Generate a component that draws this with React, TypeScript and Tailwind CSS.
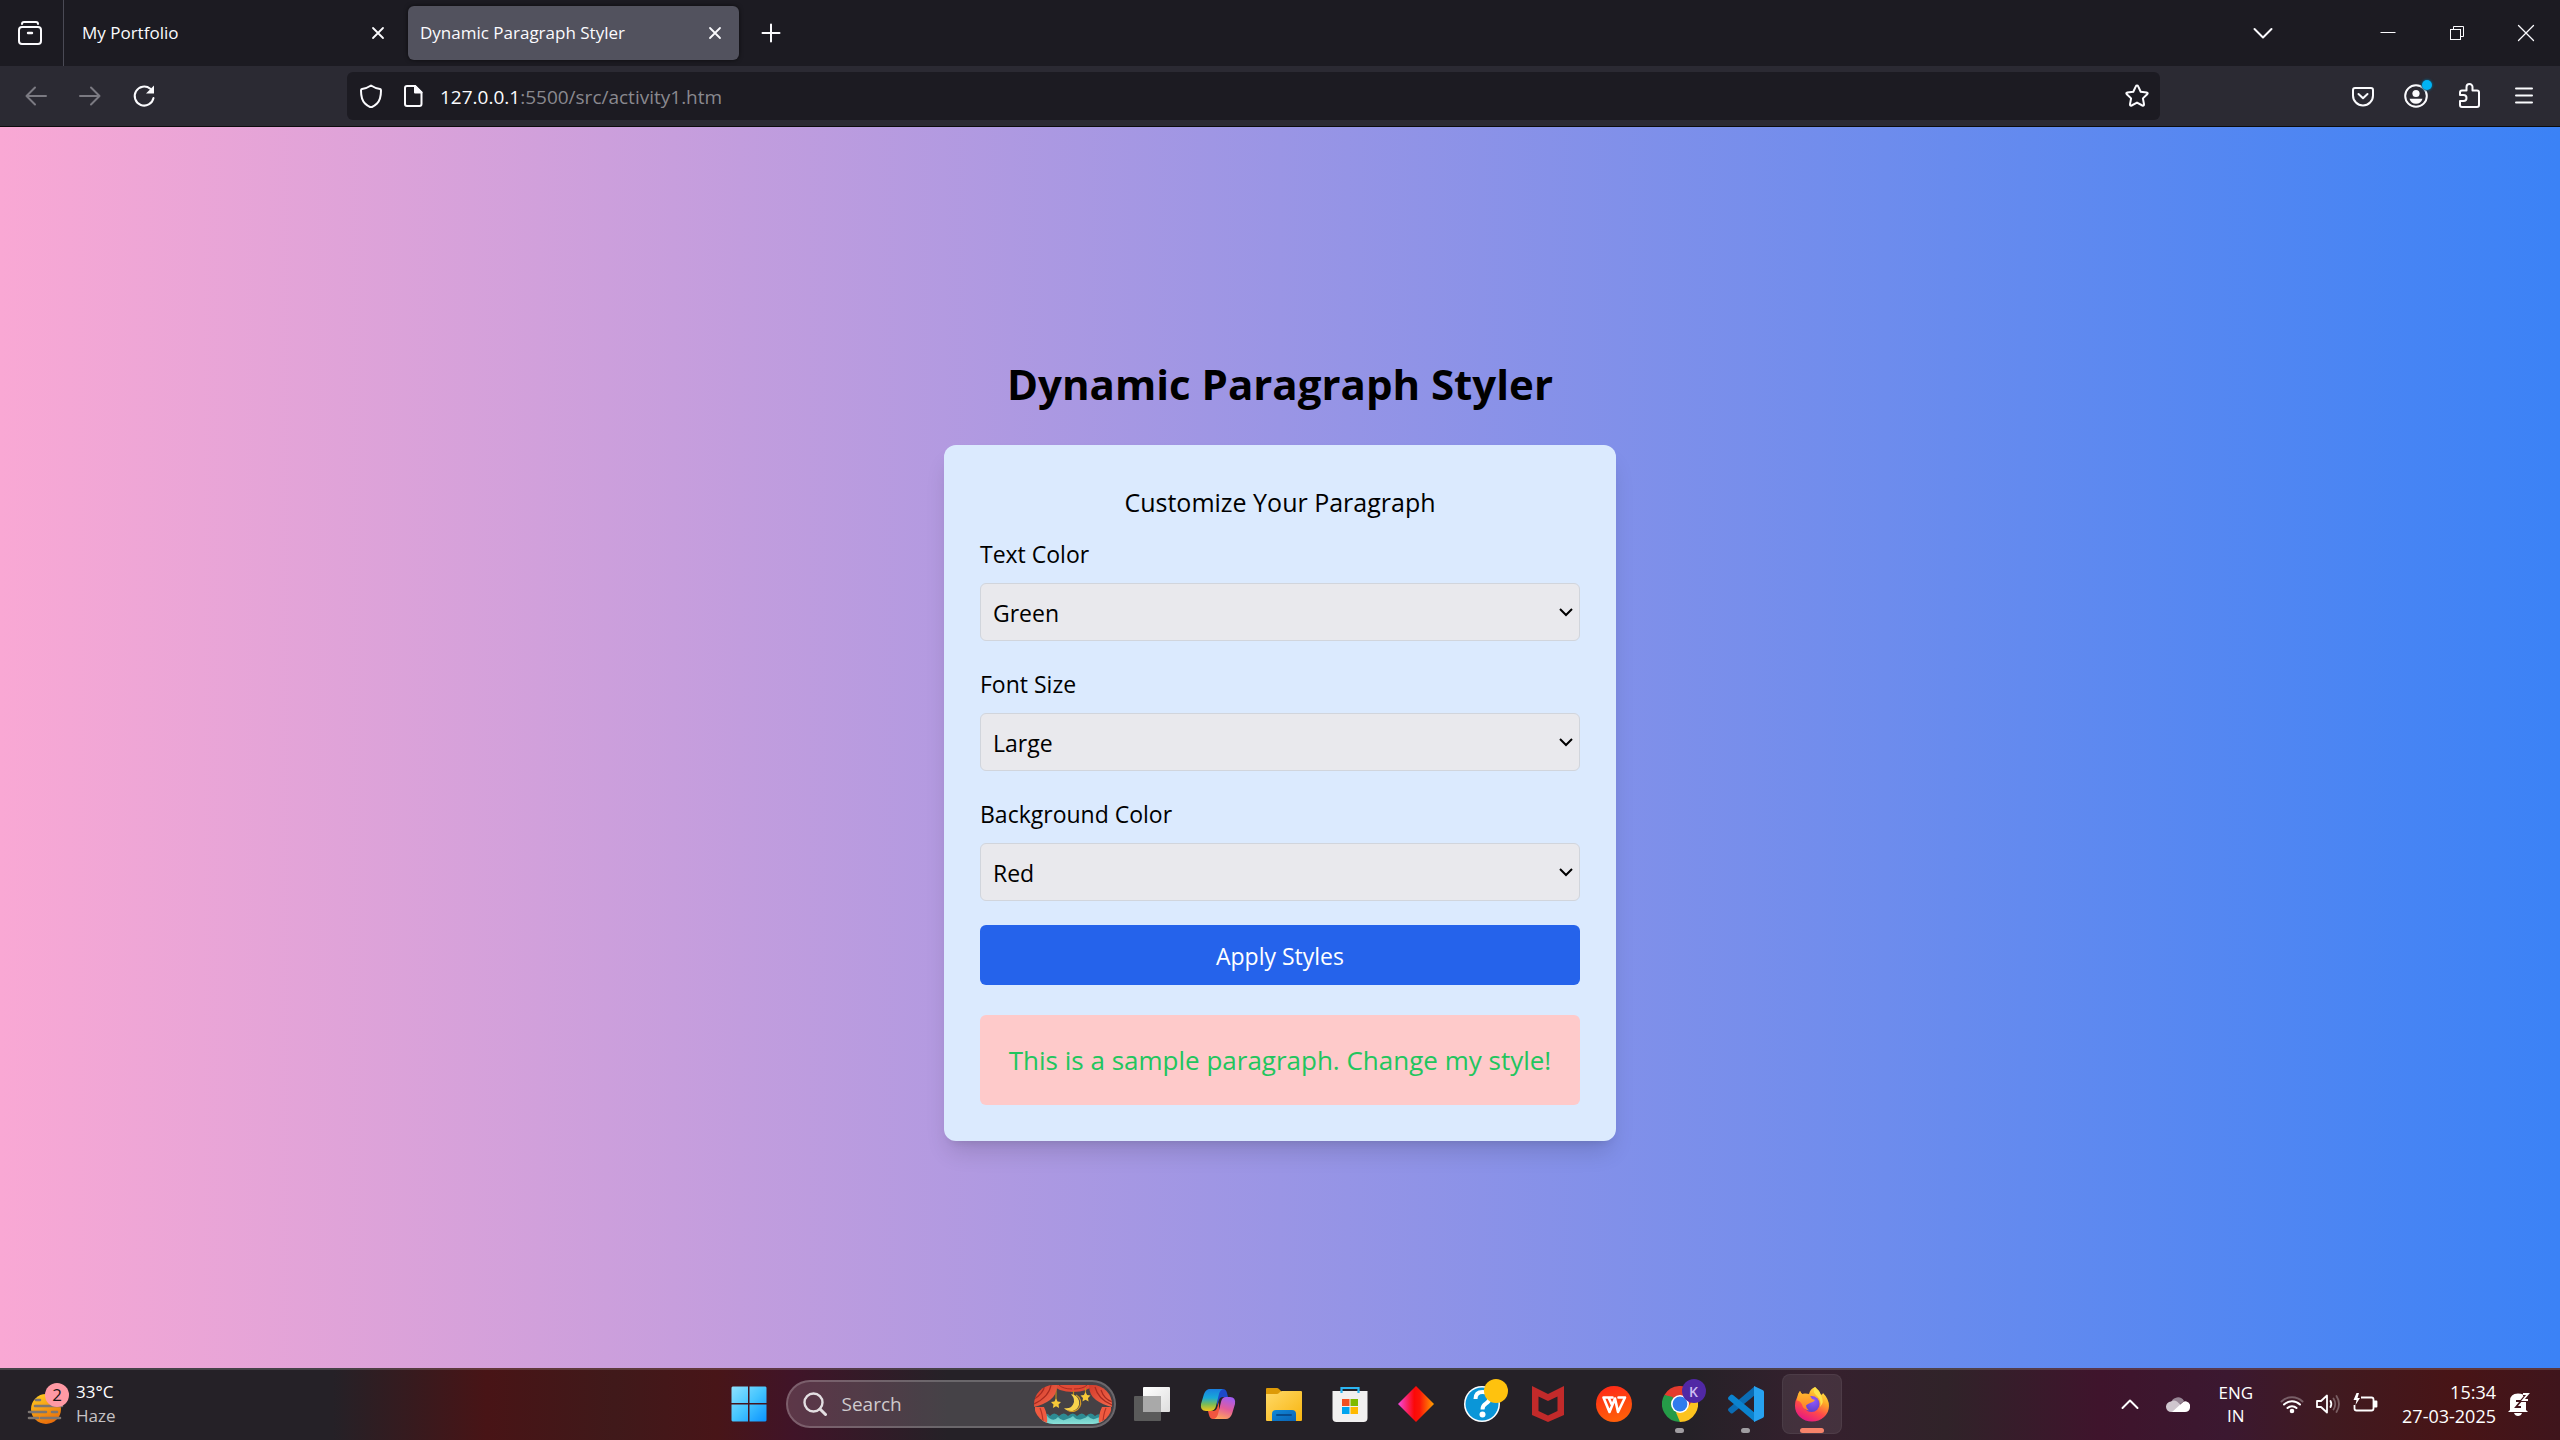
import { useState, type ReactNode } from "react";

type IconProps = { className?: string; size?: number; box?: string; children: ReactNode };

function Line({ className = "", size = 24, box, children }: IconProps) {
  return (
    <svg
      className={className}
      width={size}
      height={size}
      viewBox={box ?? `0 0 ${size} ${size}`}
      fill="none"
      stroke="currentColor"
      strokeWidth="2"
      strokeLinecap="round"
      strokeLinejoin="round"
      aria-hidden="true"
    >
      {children}
    </svg>
  );
}

function CloseMark() {
  return (
    <Line size={24}>
      <path d="M7 7l10 10M17 7L7 17" strokeWidth="1.8" />
    </Line>
  );
}

function TabStrip() {
  return (
    <header className="flex h-[66px] items-center bg-[#1c1b22] text-[#fbfbfe]">
      <button aria-label="Recent browsing" className="flex h-full w-16 items-center justify-center border-r border-[#4a4a55] pr-1">
        <Line size={26}>
          <rect x="2" y="7" width="22" height="17" rx="3" />
          <path d="M5 4q0-2 2-2h12q2 0 2 2" />
          <path d="M11 13h4" strokeWidth="2.4" />
        </Line>
      </button>
      <div className="mr-1 flex h-[54px] w-[340px] items-center justify-between pl-[18px] pr-[14px]">
        <span className="text-[17px]">My Portfolio</span>
        <button aria-label="Close tab My Portfolio"><CloseMark /></button>
      </div>
      <div className="flex h-[54px] w-[331px] items-center justify-between rounded-md bg-[#52525e] pl-3 pr-3 shadow-[0_0_4px_rgba(0,0,0,0.6)]">
        <span className="text-[17px]">Dynamic Paragraph Styler</span>
        <button aria-label="Close tab Dynamic Paragraph Styler"><CloseMark /></button>
      </div>
      <button aria-label="New tab" className="ml-5">
        <Line size={24}><path d="M12 3.500v17M3.500 12h17" /></Line>
      </button>
      <div className="ml-auto flex items-center">
        <button aria-label="List all tabs" className="mr-[45px] flex w-[90px] justify-center">
          <Line size={24}><path d="M3.500 8l8.500 8.500L20.500 8" /></Line>
        </button>
        <button aria-label="Minimize" className="flex w-[69px] justify-center">
          <Line size={24}><path d="M4.500 11.500h15" strokeWidth="1" strokeLinecap="butt" /></Line>
        </button>
        <button aria-label="Restore" className="flex w-[69px] justify-center">
          <Line size={24}>
            <g strokeWidth="1" strokeLinejoin="miter">
              <rect x="5.500" y="8.500" width="10" height="10" />
              <path d="M8.500 8.500v-3h10v10h-3" />
            </g>
          </Line>
        </button>
        <button aria-label="Close window" className="flex w-[69px] justify-center">
          <Line size={24}><path d="M4.500 4.500l15 15M19.500 4.500l-15 15" strokeWidth="1.300" /></Line>
        </button>
      </div>
    </header>
  );
}

function Toolbar() {
  return (
    <nav aria-label="Browser toolbar" className="flex h-[61px] items-center border-b border-[#0c0c0d] bg-[#2b2a33] text-[#fbfbfe]">
      <div className="flex w-[347px] items-center gap-[30px] pl-6">
        <button aria-label="Back" className="text-[#7b7a82]">
          <Line size={24}><path d="M22 12H2.500M11 3.500L2.500 12l8.500 8.500" /></Line>
        </button>
        <button aria-label="Forward" className="text-[#7b7a82]">
          <Line size={24}><path d="M2 12h19.500M13 3.500l8.500 8.500-8.500 8.500" /></Line>
        </button>
        <button aria-label="Reload">
          <Line size={24}>
            <path d="M21.500 14a9.500 9.500 0 1 1-3.200-9.200" />
            <path d="M22 1.500v8h-8z" fill="currentColor" stroke="none" />
          </Line>
        </button>
      </div>
      <div className="flex h-12 flex-1 items-center rounded-md bg-[#1c1b22] pl-3 pr-[11px]">
        <button aria-label="Tracking protection">
          <Line size={24}><path d="M12 1.500q4.500 3 9 3.500q1 0.300 1 1.500q0 9-4 13q-2.500 2.500-6 4q-3.500-1.500-6-4q-4-4-4-13q0-1.200 1-1.500q4.500-0.500 9-3.500z" /></Line>
        </button>
        <button aria-label="Site information" className="ml-[18px]">
          <Line size={24}>
            <path d="M6 2h8l6.500 6.500V20q0 2-2 2H6q-2 0-2-2V4q0-2 2-2z" />
            <path d="M14 2v6.500h6.500z" fill="currentColor" />
          </Line>
        </button>
        <div className="relative ml-[15px] flex-1 pt-0.5">
          <input
            aria-label="Address"
            className="w-full bg-transparent text-[19px] text-transparent caret-white outline-none"
            defaultValue="127.0.0.1:5500/src/activity1.htm"
          />
          <span aria-hidden="true" className="pointer-events-none absolute inset-0 flex items-center pt-0.5 text-[19px] text-[#8a898f]">
            <span className="text-[#fbfbfe]">127.0.0.1</span>:5500/src/activity1.htm
          </span>
        </div>
        <button aria-label="Bookmark this page">
          <Line size={24}><path d="M12 1.500q0.800 0 1.200 0.900l2.500 5.300 5.900 0.800q1.800 0.400 0.600 1.800l-4.300 4.100 1.100 5.900q0.100 1.800-1.600 1.200L12 18.600l-5.400 2.900q-1.700 0.600-1.600-1.200l1.100-5.900-4.300-4.100q-1.200-1.400 0.600-1.800l5.900-0.800 2.500-5.300q0.400-0.900 1.200-0.900z" /></Line>
        </button>
      </div>
      <div className="flex w-[400px] items-center justify-end gap-[29px] pr-6">
        <button aria-label="Save to Pocket">
          <Line size={24}>
            <path d="M4 4h16q2 0 2 2v5.500a10 10 0 0 1-20 0V6q0-2 2-2z" />
            <path d="M7.500 10l4.500 4.300L16.500 10" />
          </Line>
        </button>
        <button aria-label="Account" className="relative">
          <Line size={24}>
            <circle cx="12" cy="12" r="10.800" />
            <circle cx="12" cy="9.500" r="3.600" fill="currentColor" stroke="none" />
            <path d="M5.500 14.800h13q-1.500 5-6.500 5t-6.500-5z" fill="currentColor" stroke="none" />
          </Line>
          <span className="absolute -right-1 -top-1 h-2.5 w-2.5 rounded-full bg-[#00b3f4] shadow-[0_0_2px_1px_#12506d]" />
        </button>
        <button aria-label="Extensions">
          <Line size={26}>
            <path d="M5 24q-2 0-2-2v-4h3.500a3 3 0 0 0 0-6H3V9.500q0-2 2-2h4.500V4a3 3 0 0 1 6 0v3.500H20q2 0 2 2V22q0 2-2 2z" />
          </Line>
        </button>
        <button aria-label="Menu">
          <Line size={24}><path d="M4 4.500h16M4 11.500h16M4 18.500h16" /></Line>
        </button>
      </div>
    </nav>
  );
}

type FieldProps = {
  id: string;
  label: string;
  value: string;
  options: string[];
  onChange: (value: string) => void;
};

function SelectField({ id, label, value, options, onChange }: FieldProps) {
  return (
    <div className="flex flex-col gap-3">
      <label htmlFor={id} className="text-[23px] leading-[34px]">{label}</label>
      <div className="relative">
        <select
          id={id}
          value={value}
          onChange={(e) => onChange(e.target.value)}
          className="h-[58px] w-full appearance-none rounded-md border border-gray-300 bg-[#e9e9ed] px-3 pt-1 text-[23px] text-black"
        >
          {options.map((o) => <option key={o}>{o}</option>)}
        </select>
        <svg className="pointer-events-none absolute right-1.5 top-6 h-3 w-4" viewBox="0 0 16 12" fill="none" stroke="#000" strokeWidth="2" aria-hidden="true">
          <path d="M2 2l6 6 6-6" />
        </svg>
      </div>
    </div>
  );
}

const textColors: Record<string, string> = {
  Black: "text-black",
  Green: "text-[#22c55e]",
  Blue: "text-[#3b82f6]",
};
const textSizes: Record<string, string> = {
  Small: "text-[20px]",
  Medium: "text-[23px]",
  Large: "text-[26px]",
};
const backgrounds: Record<string, string> = {
  White: "bg-white",
  Red: "bg-[#fecaca]",
  Yellow: "bg-[#fef08a]",
};

function Styler() {
  const [color, setColor] = useState("Green");
  const [size, setSize] = useState("Large");
  const [back, setBack] = useState("Red");
  const [applied, setApplied] = useState({ color: "Green", size: "Large", back: "Red" });
  return (
    <main className="flex flex-1 flex-col items-center justify-center gap-9 bg-[linear-gradient(to_right,#f9a8d4,#3b82f6)] text-black">
      <h1 className="pt-1 text-[42px] font-bold leading-[50px]">Dynamic Paragraph Styler</h1>
      <form
        onSubmit={(e) => {
          e.preventDefault();
          setApplied({ color, size, back });
        }}
        className="w-full max-w-2xl rounded-xl bg-[#dbeafe] p-9 shadow-[0_15px_23px_-5px_rgba(0,0,0,0.14),0_6px_9px_-6px_rgba(0,0,0,0.12)]"
      >
        <h2 className="text-center text-[25px] leading-[42px]">Customize Your Paragraph</h2>
        <div className="mt-3.5 flex flex-col gap-[26px]">
          <SelectField id="color" label="Text Color" value={color} options={Object.keys(textColors)} onChange={setColor} />
          <SelectField id="size" label="Font Size" value={size} options={Object.keys(textSizes)} onChange={setSize} />
          <SelectField id="back" label="Background Color" value={back} options={Object.keys(backgrounds)} onChange={setBack} />
        </div>
        <button type="submit" className="mt-6 h-15 w-full rounded-md bg-[#2563eb] pt-1 text-[23px] text-white">Apply Styles</button>
        <p className={`mt-[30px] rounded-md px-6 py-6 text-center leading-[42px] ${textColors[applied.color]} ${textSizes[applied.size]} ${backgrounds[applied.back]}`}>
          This is a sample paragraph. Change my style!
        </p>
      </form>
    </main>
  );
}

function Pic({ children }: { children: ReactNode }) {
  return (
    <svg width="36" height="36" viewBox="0 0 36 36" aria-hidden="true">{children}</svg>
  );
}

function AppButton({ label, state = "idle", children }: { label: string; state?: "idle" | "open" | "active"; children: ReactNode }) {
  return (
    <button aria-label={label} className="relative flex h-[66px] w-[66px] items-center justify-center">
      {state === "active" && <span className="absolute inset-x-[3px] inset-y-[3px] rounded-lg border border-white/5 bg-white/8" />}
      <span className="relative">{children}</span>
      {state === "open" && <span className="absolute bottom-1 h-[5px] w-[9px] rounded-full bg-[#a09da1]" />}
      {state === "active" && <span className="absolute bottom-1 h-[5px] w-6 rounded-full bg-[#f6836a]" />}
    </button>
  );
}

function StageScene() {
  return (
    <svg width="78" height="39" viewBox="0 0 78 39" aria-hidden="true">
      <defs>
        <clipPath id="pill"><rect width="78" height="39" rx="19.500" /></clipPath>
        <linearGradient id="sea" x1="0" y1="0" x2="0" y2="1"><stop stopColor="#5fc4c0" /><stop offset="1" stopColor="#8fe3da" /></linearGradient>
        <linearGradient id="drape" x1="0" y1="0" x2="1" y2="1"><stop stopColor="#d33b2b" /><stop offset="1" stopColor="#f4694c" /></linearGradient>
      </defs>
      <g clipPath="url(#pill)">
        <rect width="78" height="39" fill="#454145" />
        <path d="M8 32q4-6 8-1q4-5 9 0q5-5 9 0q5-5 9 0q5-5 9 0q5-5 9 0q4-4 9 1v8H8z" fill="#2d8b93" />
        <path d="M8 31q4-3 7 2q5 4 9-1q4 5 9 2q4-1 6-3q4 5 9 3q4-1 6-3q4 5 9 2q4-1 7-3v10H8z" fill="url(#sea)" />
        <path d="M19 0h40q-5 7-20 7T19 0z" fill="#e04a35" />
        <path d="M25 0q4 4 13 4M53 0q-4 4-13 4" stroke="#a92c22" strokeWidth="1" fill="none" />
        <path d="M22 3v12M39.500 6v4M51.500 3v6" stroke="#b98a1b" strokeWidth="1.200" />
        <path d="M22 13.500l1.600 3.100 3.400 0.500-2.500 2.400 0.600 3.500-3.100-1.700-3.100 1.700 0.600-3.500L17 17.100l3.400-0.500z" fill="#f6c938" />
        <path d="M51.500 7l1.600 3.100 3.400 0.500-2.500 2.400 0.600 3.500-3.100-1.700-3.100 1.700 0.600-3.500-2.500-2.400 3.400-0.500z" fill="#f6c938" />
        <path d="M37 9.300a8.500 8.500 0 1 1-7 13.700q6 1.500 9-3.500t-2-10.200z" fill="#f8d24c" />
        <path d="M42 10a8.500 8.500 0 0 1-8 15.500" stroke="#d29a26" strokeWidth="1.200" fill="none" />
        <path d="M0 0h23q0 10-7 15T0 22z" fill="url(#drape)" />
        <path d="M78 0H55q0 10 7 15t16 7z" fill="url(#drape)" />
        <path d="M17 0Q15 12 0 19M11 0q-2 9-11 14M67 5q3 9 11 12M61 2q3 12 17 18" stroke="#a82a20" strokeWidth="1.200" fill="none" />
        <path d="M1 22h9q4 8 3 17H0zM77 22h-9q-4 8-3 17h13z" fill="#ef5a40" />
        <path d="M6 23q3 7 3 16M72 23q-3 7-3 16" stroke="#b43326" strokeWidth="1.200" fill="none" />
      </g>
    </svg>
  );
}

function Copilot() {
  return (
    <Pic>
      <defs>
        <linearGradient id="cpA" x1="0" y1="0" x2="0" y2="1"><stop stopColor="#1a7fe0" /><stop offset="0.400" stopColor="#18a8d8" /><stop offset="0.700" stopColor="#7dbb55" /><stop offset="1" stopColor="#f5c518" /></linearGradient>
        <linearGradient id="cpB" x1="0.600" y1="0" x2="0.300" y2="1"><stop stopColor="#a25cf0" /><stop offset="0.500" stopColor="#e25c9c" /><stop offset="1" stopColor="#ffa45c" /></linearGradient>
      </defs>
      <path d="M17 3h6q3 0 4 4l1 4h-5q-3 0-4 3l-2 6z" fill="#1c49c9" />
      <path d="M19 33h-6q-3 0-4-4l-1-4h5q3 0 4-3l2-6z" fill="#f0553f" />
      <path d="M10 3h13q-3 1-4 5l-3 12q-1 5-6 5H6q-6 0-5-7l3-10q2-5 6-5z" fill="url(#cpA)" />
      <path d="M26 33H14q3-1 4-5l3-12q1-5 5-5h4q6 0 5 7l-3 10q-2 5-6 5z" fill="url(#cpB)" />
    </Pic>
  );
}

function Firefox() {
  return (
    <Pic>
      <defs>
        <linearGradient id="fxA" x1="0.800" y1="0" x2="0.300" y2="1"><stop stopColor="#fff44f" /><stop offset="0.350" stopColor="#ffa927" /><stop offset="0.650" stopColor="#ff4a4a" /><stop offset="1" stopColor="#e31587" /></linearGradient>
        <radialGradient id="fxB" cx="0.600" cy="0.300" r="0.800"><stop stopColor="#9059ff" /><stop offset="1" stopColor="#5b3bc0" /></radialGradient>
        <linearGradient id="fxC" x1="0" y1="0" x2="0" y2="1"><stop stopColor="#ffbd2e" /><stop offset="1" stopColor="#ff7a2a" /></linearGradient>
      </defs>
      <path d="M21 1q4 3 6 8q2-1 2-2q6 6 6 13a17 15.500 0 0 1-34 0q0-6 3-10q0-3 2-5q1 2 2 3q4-1 7 0q1-5 6-7z" fill="url(#fxA)" />
      <circle cx="17.500" cy="18" r="8" fill="url(#fxB)" />
      <path d="M6 5q1 2 2 3q5-1 8 2q1 1 2 3l3 1q-1 2-5 3q-3 1-4 2.500q0 3 3 5q-6-1-7-6q-2-4-5-4q0-6 3-9.500z" fill="url(#fxC)" />
      <path d="M21 1q-3 5 2 9q5 5 3 11q5-5 1-12q-2-5-6-8z" fill="#ffe24a" />
    </Pic>
  );
}

function Taskbar() {
  return (
    <footer className="grid h-[72px] grid-cols-[1fr_auto_1fr] items-center border-t-2 border-white/15 bg-[#252127] bg-[linear-gradient(to_right,#252127_13%,#481416_19%,#40191a_24%,#481518_28%,#401428_31%,#252127_37%,#252127_66%,#36202e_71%,#302329_76%,#3f142c_82%,#3b1830_87%,#401a20_91%,#481416_96%,#3f151c_100%)] bg-origin-border pb-0.5 text-white">
      <button aria-label="Weather, 33 degrees, haze" className="flex items-center justify-self-start pl-[27px] text-left">
        <svg width="44" height="46" viewBox="0 0 44 46" aria-hidden="true">
          <defs><linearGradient id="sun" x1="0.300" y1="0" x2="0.700" y2="1"><stop stopColor="#ffc81e" /><stop offset="1" stopColor="#e8680a" /></linearGradient></defs>
          <circle cx="19" cy="28" r="15" fill="url(#sun)" />
          <path d="M9 19h4M8 25h27M2 31h17M25 31h5M2 37h9M14 37h19" stroke="#7d7672" strokeWidth="2.600" strokeLinecap="round" />
          <circle cx="30" cy="14" r="12" fill="#ff99a4" />
          <text x="30" y="20" textAnchor="middle" fontSize="17" fill="#1b1517">2</text>
        </svg>
        <span className="ml-[5px] flex flex-col text-[17px] leading-6">
          <span>33°C</span>
          <span className="text-[#c5c1c4]">Haze</span>
        </span>
      </button>

      <div className="flex items-center">
        <AppButton label="Start">
          <Pic>
            <defs><linearGradient id="win" x1="0" y1="0" x2="1" y2="1"><stop stopColor="#8fe2ff" /><stop offset="0.500" stopColor="#45c5ff" /><stop offset="1" stopColor="#0a93ff" /></linearGradient></defs>
            <path d="M1.500 0.500H17V17H0.500V1.500zM18.500 0.500H34.500L35.500 1.500V17H18.500zM0.500 18.500H17V35.500H1.500L0.500 34.500zM18.500 18.500H35.500V34.500L34.500 35.500H18.500z" fill="url(#win)" />
          </Pic>
        </AppButton>
        <div className="ml-1 mr-[3px] flex h-12 w-[330px] items-center rounded-full border-2 border-white/20 bg-white/15 pl-[15px] pr-0.5">
          <svg width="24" height="24" viewBox="0 0 24 24" fill="none" stroke="#e3dfe2" strokeWidth="2.400" strokeLinecap="round" aria-hidden="true">
            <circle cx="10.500" cy="10.500" r="9" />
            <path d="M17 17l5.500 5.500" strokeWidth="3" />
          </svg>
          <input aria-label="Search" placeholder="Search" className="ml-[15px] min-w-0 flex-1 bg-transparent text-[19px] text-white outline-none placeholder:text-[#cfcbce]" />
          <StageScene />
        </div>
        <AppButton label="Task view">
          <Pic>
            <defs><linearGradient id="tvA" x1="0" y1="0" x2="1" y2="1"><stop stopColor="#ffffff" /><stop offset="1" stopColor="#dedede" /></linearGradient></defs>
            <rect x="9" y="1" width="27" height="25" rx="1" fill="url(#tvA)" />
            <rect x="0" y="10" width="27" height="25" rx="1" fill="#5a5a5a" />
            <rect x="9" y="10" width="18" height="16" fill="#a9a9a9" />
          </Pic>
        </AppButton>
        <AppButton label="Copilot"><Copilot /></AppButton>
        <AppButton label="File Explorer">
          <Pic>
            <defs>
              <linearGradient id="fol" x1="0" y1="0" x2="1" y2="1"><stop stopColor="#ffd968" /><stop offset="1" stopColor="#f8b50f" /></linearGradient>
              <linearGradient id="folB" x1="0" y1="0" x2="1" y2="1"><stop stopColor="#1088d8" /><stop offset="1" stopColor="#0a63b4" /></linearGradient>
            </defs>
            <path d="M0 3q0-1 1-1h10q1 0 2 1l3 3v4H0z" fill="#dd9a07" />
            <path d="M0 8h11q1 0 2-1l1.500-1.500q1-0.500 2-0.500H35q1 0 1 1v28q0 1-1 1H1q-1 0-1-1z" fill="url(#fol)" />
            <path d="M6 35v-7q0-4 4-4h16q4 0 4 4v7z" fill="url(#folB)" />
            <path d="M11 29h14" stroke="#084c8d" strokeWidth="2" strokeLinecap="round" />
          </Pic>
        </AppButton>
        <AppButton label="Microsoft Store">
          <Pic>
            <path d="M0.500 5h35v27q0 4-4 4h-27q-4 0-4-4z" fill="#f1f0f0" />
            <path d="M9.500 7V2h17v5" stroke="#2bb5f2" strokeWidth="2.200" fill="none" />
            <path d="M10 13h7.500v7H10z" fill="#f25022" /><path d="M18.500 13H26v7h-7.500z" fill="#7fba00" />
            <path d="M10 21h7.500v7H10z" fill="#00a4ef" /><path d="M18.500 21H26v7h-7.500z" fill="#ffb900" />
          </Pic>
        </AppButton>
        <AppButton label="Diamond app">
          <Pic>
            <defs><linearGradient id="dia"><stop stopColor="#f548e0" /><stop offset="0.450" stopColor="#fb0808" /><stop offset="0.600" stopColor="#fb1508" /><stop offset="1" stopColor="#ffa000" /></linearGradient></defs>
            <path d="M18 0l18 18-18 18L0 18z" fill="url(#dia)" />
          </Pic>
        </AppButton>
        <AppButton label="Help">
          <Pic>
            <circle cx="18" cy="18" r="18" fill="#fff" />
            <circle cx="18" cy="18" r="16.500" fill="#0a96d8" />
            <path d="M11.500 13q0-7 7-7t7 6q0 3.500-3.500 5.500t-3.500 6" stroke="#fff" strokeWidth="4" fill="none" />
            <circle cx="18.500" cy="28.500" r="3" fill="#fff" />
          </Pic>
          <span className="absolute -right-2 -top-[7px] h-6 w-6 rounded-full bg-[#ffc20e]" />
        </AppButton>
        <AppButton label="McAfee">
          <Pic>
            <path d="M2 0l16 8 16-8v29L18 36 2 29zM8.500 10.500v14.500L18 29.500l9.500-4.500V10.500L18 15z" fill="#c22a2a" fillRule="evenodd" />
          </Pic>
        </AppButton>
        <AppButton label="WPS Office">
          <Pic>
            <defs><linearGradient id="wps" x1="0" y1="0" x2="0.300" y2="1"><stop stopColor="#ff2418" /><stop offset="1" stopColor="#ff5d0a" /></linearGradient></defs>
            <circle cx="18" cy="18" r="18" fill="url(#wps)" />
            <path d="M16.500 11.500H7.500l6 14.500 5.500-13.500 3 13.500 7-14.500h-6.500M12.500 11.500l3 6.500" stroke="#fff" strokeWidth="2.600" fill="none" strokeLinejoin="round" strokeLinecap="round" />
          </Pic>
        </AppButton>
        <AppButton label="Chrome" state="open">
          <Pic>
            <path d="M18 18L2.400 9A18 18 0 0 1 33.600 9z" fill="#e33b2e" />
            <path d="M18 18L33.600 9A18 18 0 0 1 18 36z" fill="#fcc31e" />
            <path d="M18 18l0.100 18A18 18 0 0 1 2.400 9z" fill="#259b48" />
            <path d="M18 9.500h15.800L26 21z" fill="#e33b2e" />
            <path d="M25.500 22L18 36l-4-9.500z" fill="#fcc31e" />
            <path d="M10.800 22.500L2.400 9l8.400 2z" fill="#259b48" />
            <circle cx="18" cy="18" r="9" fill="#fff" />
            <circle cx="18" cy="18" r="7.400" fill="#2f7bee" />
          </Pic>
          <span className="absolute -right-2 -top-[7px] flex h-6 w-6 items-center justify-center rounded-full bg-[#5028a5] text-[14px] font-semibold text-[#cdbcf2]">K</span>
        </AppButton>
        <AppButton label="Visual Studio Code" state="open">
          <Pic>
            <path d="M27 0v9L5 27q-1.500 1-2.500 0L0.500 25q-1-1.200 0-2.500z" fill="#0b6cb4" />
            <path d="M0.500 13.500q-1-1.200 0-2.500l2-2q1-1 2.500 0l22 18v9z" fill="#0b83cf" />
            <path d="M26 0l8.500 4q1.500 0.700 1.500 2v24q0 1.300-1.500 2L26 36z" fill="#27a2f0" />
          </Pic>
        </AppButton>
        <AppButton label="Firefox" state="active"><Firefox /></AppButton>
      </div>

      <div className="flex items-center justify-self-end pr-[30px]">
        <button aria-label="Show hidden icons" className="mr-[27px]">
          <Line size={18}><path d="M1.500 13L9 5.500l7.500 7.500" /></Line>
        </button>
        <button aria-label="OneDrive" className="mr-[28px]">
          <svg width="24" height="18" viewBox="0 0 24 18" aria-hidden="true">
            <path d="M5 8a7 7 0 0 1 13-2l-5 4z" fill="#978695" />
            <path d="M5.500 17A5 5 0 0 1 5 6.500q3-2 6 0L18 13l-9 4z" fill="#cfc6ce" />
            <path d="M6 17L16 8q2-2.500 4.500-1.500A5.400 5.400 0 0 1 19 17z" fill="#fff" />
          </svg>
        </button>
        <button className="mr-[27px] flex flex-col items-center text-[17px] leading-[23px]">
          <span>ENG</span>
          <span>IN</span>
        </button>
        <button aria-label="Network, volume and battery" className="mr-6 flex items-center gap-3">
          <svg width="24" height="24" viewBox="0 0 24 24" fill="none" stroke="#fff" strokeWidth="2" strokeLinecap="round" aria-hidden="true">
            <path d="M1.500 9.500a15 15 0 0 1 21 0" opacity="0.300" />
            <path d="M4 12.500a11.500 11.500 0 0 1 16 0M7.500 16a6.500 6.500 0 0 1 9 0" />
            <circle cx="12" cy="19" r="1.300" fill="#fff" />
          </svg>
          <svg width="24" height="24" viewBox="0 0 24 24" fill="none" stroke="#fff" strokeWidth="1.800" strokeLinejoin="round" strokeLinecap="round" aria-hidden="true">
            <path d="M1 9h4l6-5.500v17L5 15H1z" />
            <path d="M14.500 9q1.700 3 0 6" />
            <path d="M17.500 6.500q3.500 5.500 0 11M20.500 4q5 8 0 16" opacity="0.300" />
          </svg>
          <svg width="26" height="24" viewBox="0 0 26 24" fill="none" stroke="#fff" strokeWidth="1.800" strokeLinejoin="round" aria-hidden="true">
            <path d="M9 5.500h10.500q2 0 2 2v9q0 2-2 2h-15q-2 0-2-2V13" />
            <path d="M22 9.500h2.500v5H22z" fill="#fff" />
            <path d="M4.500 1L1.500 8h3L3.500 13 8 6H5.500L7 1z" fill="#fff" stroke="none" />
          </svg>
        </button>
        <button className="mr-3 flex flex-col items-end text-[18px] leading-6">
          <span>15:34</span>
          <span>27-03-2025</span>
        </button>
        <button aria-label="Notifications, do not disturb">
          <svg width="22" height="26" viewBox="0 0 22 26" aria-hidden="true">
            <path d="M2 19v-9q0-7.500 8-7.500q3 0 5 1l3 4V19l2 2H0z" fill="#fff" />
            <path d="M6 22h8q-1 3-4 3t-4-3z" fill="#fff" />
            <path d="M8 10h5l-5 6h5" stroke="#43151c" strokeWidth="1.800" fill="none" />
            <path d="M15 3h5l-5 6h5" stroke="#43151c" strokeWidth="4" fill="none" />
            <path d="M15 3h5l-5 6h5" stroke="#fff" strokeWidth="1.800" fill="none" />
          </svg>
        </button>
      </div>
    </footer>
  );
}

export default function App() {
  return (
    <div className="flex min-h-screen flex-col font-['Open_Sans','Noto_Sans',sans-serif]">
      <TabStrip />
      <Toolbar />
      <Styler />
      <Taskbar />
    </div>
  );
}
